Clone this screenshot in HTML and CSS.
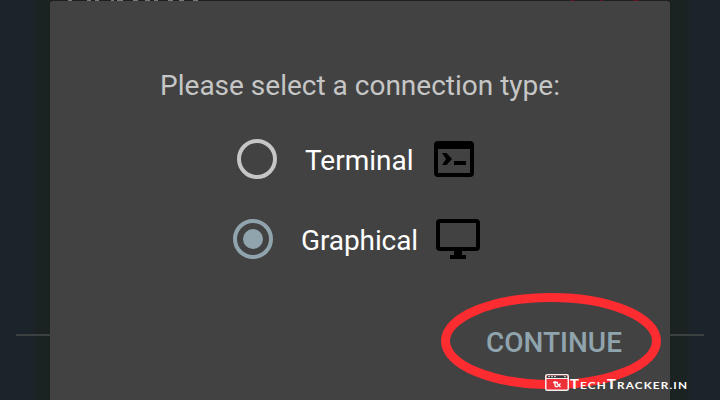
FILE: index.html
```
<!DOCTYPE html>
<html lang="en">
<head>
<meta charset="utf-8">
<title>Connection type</title>
<link rel="stylesheet" href="styles.css">
</head>
<body>
<div class="screen">
  <svg class="backdrop-title" width="720" height="1" viewBox="0 0 720 1" aria-hidden="true">
    <path d="M68 .5h4M87 .5h4M95 .5h4M111 .5h3M117 .5h6M133 .5h5M145 .5h5M154 .5h4M168 .5h5M179 .5h5M193 .5h5" stroke="#77797a"/>
    <path d="M570 .5h5M600 .5h3M633 .5h6" stroke="#5a1220"/>
  </svg>
  <span class="divider"></span>
  <main class="dialog">
    <h1 class="title">Please select a connection type:</h1>
    <div class="option terminal">
      <span class="radio"></span>
      <span class="label">Terminal</span>
      <svg class="icon" width="40" height="36" viewBox="0 0 40 36">
        <path fill-rule="evenodd" d="M4 0H36Q40 0 40 4V32Q40 36 36 36H4Q0 36 0 32V4Q0 0 4 0ZM4 8V32H36V8Z"/>
        <path d="M8 12h4.500l5.500 6-5.500 6H8l4-6zM20 20h12v4H20z"/>
      </svg>
    </div>
    <div class="option graphical">
      <span class="radio checked"></span>
      <span class="label">Graphical</span>
      <svg class="icon" width="44" height="40" viewBox="0 0 44 40">
        <path fill-rule="evenodd" d="M4 0H40Q44 0 44 4V28Q44 32 40 32H26V36H30V40H14V36H18V32H4Q0 32 0 28V4Q0 0 4 0ZM4 4V28H40V4Z"/>
      </svg>
    </div>
    <div class="actions"><span class="continue">CONTINUE</span></div>
  </main>
  <span class="divider"></span>
  <svg class="highlight" width="222" height="98" viewBox="0 0 222 98"><ellipse cx="111" cy="49" rx="105.500" ry="43.500" fill="none" stroke="#fc2c30" stroke-width="9"/></svg>
  <div class="brand">
    <svg width="24" height="18" viewBox="0 0 24 18">
      <rect x=".75" y=".75" width="22.500" height="15.500" rx="1.500" fill="#ee3038" stroke="#f5f0f0" stroke-width="1.500"/>
      <path d="M2 1.500h20v2.500H2z" fill="#35383b"/>
      <path d="M3 2.700h2M6 2.700h2M9 2.700h2M19 2.700h2" stroke="#ddd"/>
      <path d="M1 4.500h22" stroke="#f5f0f0"/>
      <path d="M8 8.500h5M10 7v4q0 2 2 1.500M12 9.500l3.500 3.500M15.500 9.500L12 13" fill="none" stroke="#fff" stroke-width="1.300"/>
    </svg>
    <span class="brand-name"><b>T</b>ECH<b>T</b>RACKER.IN</span>
  </div>
</div>
</body>
</html>
```

FILE: styles.css
```
* { box-sizing: border-box; }
body { margin: 0; background: #1c242b; font-family: Roboto, sans-serif; }
.screen {
  position: relative;
  display: grid;
  grid-template-columns: 34px 620px 34px;
  justify-content: center;
  width: 720px;
  height: 400px;
  padding-top: 1px;
  overflow: hidden;
  background: linear-gradient(90deg, #1c242b 30px, #1b2222 40px, #1b2222 684px, #1c242b 692px);
}
.backdrop-title { position: absolute; top: 0; left: 0; background: linear-gradient(90deg, transparent 50px, #1e1f20 50px, #1e1f20 670px, transparent 670px); }
.divider { height: 2px; margin-top: 333px; background: #3b4041; }
.dialog { height: 399px; padding-top: 68px; background: #424242; border-radius: 3px 3px 0 0; }
.title { margin: 0; font-size: 28px; line-height: 34px; font-weight: 400; color: #c6c6c6; text-align: center; white-space: nowrap; }
.option { display: flex; align-items: center; height: 80px; color: #fff; font-size: 28px; }
.terminal { padding-left: 187px; margin-top: 16px; }
.graphical { padding-left: 183px; }
.radio { display: grid; place-items: center; width: 40px; height: 40px; border: 4px solid #c6c6c6; border-radius: 50%; }
.checked { border-color: #90a4ae; }
.checked::before { content: ""; width: 20px; height: 20px; border-radius: 50%; background: #90a4ae; }
.label { width: 109px; margin-left: 28px; line-height: 34px; padding-top: 4px; white-space: nowrap; }
.icon { margin-left: 20px; fill: #000; }
.graphical .label { width: 117px; letter-spacing: -.1px; }
.graphical .icon { margin-left: 18px; }
.actions { display: flex; justify-content: flex-end; padding: 47px 48px 0 0; }
.continue { color: #90a4ae; font-size: 28px; font-weight: 500; line-height: 34px; }
.highlight { position: absolute; left: 440px; top: 292px; }
.brand { position: absolute; left: 545px; top: 374px; display: flex; gap: 1px; color: #fff; }
.brand-name { font: 700 10.3px/20px Lato, sans-serif; letter-spacing: 1px; white-space: nowrap; transform: scaleX(1.14); transform-origin: left; }
.brand-name b { font-size: 13px; }
```
